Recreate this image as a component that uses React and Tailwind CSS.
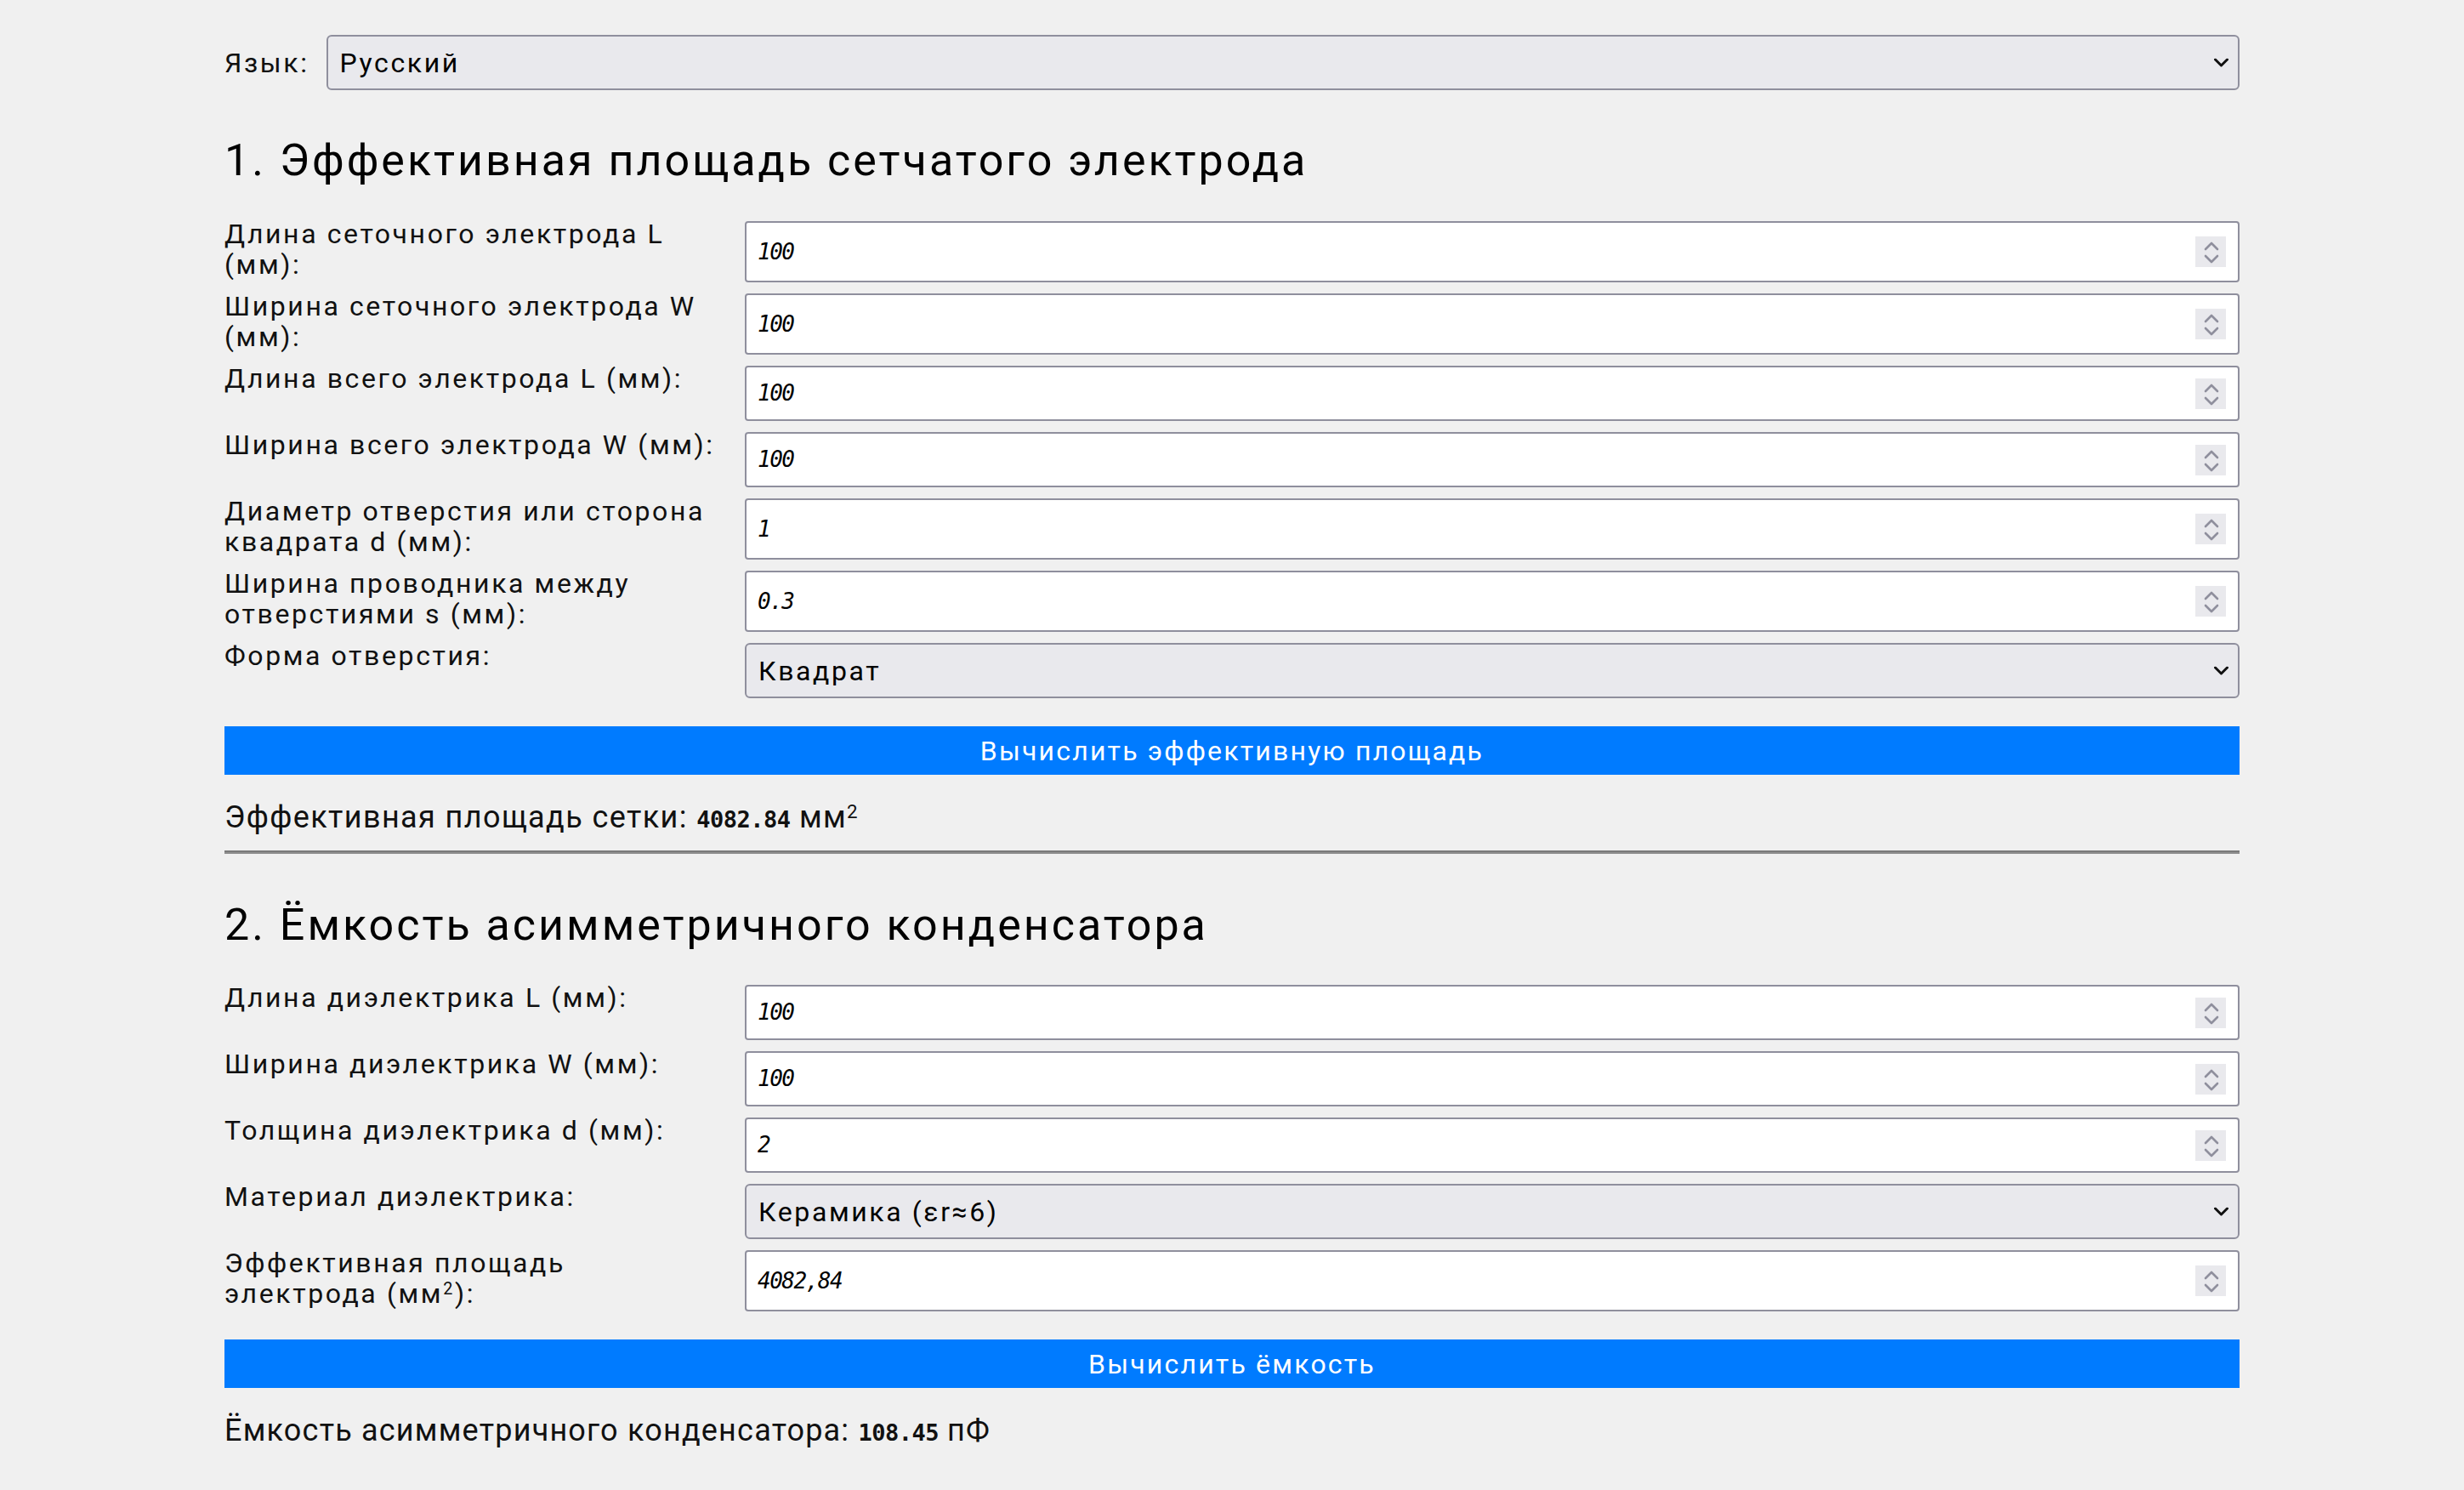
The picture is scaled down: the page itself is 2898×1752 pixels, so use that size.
import React from "react";

const digitFont = "font-['DejaVu_Sans_Mono',monospace] italic";

function Sup() {
  return <sup className="text-[0.62em]">2</sup>;
}

function Spinner() {
  return (
    <div className="pointer-events-none absolute right-[16px] top-1/2 h-[36px] w-[36px] -translate-y-1/2 bg-[#e9e9ed]">
      <svg width="36" height="36" viewBox="0 0 36 36" fill="none">
        <path d="M12 15 L19 8 L26 15" stroke="#8f8f9d" strokeWidth="2.6" strokeLinecap="round" strokeLinejoin="round" />
        <path d="M12 23 L19 30 L26 23" stroke="#8f8f9d" strokeWidth="2.6" strokeLinecap="round" strokeLinejoin="round" />
      </svg>
    </div>
  );
}

function Chevron() {
  return (
    <svg
      className="pointer-events-none absolute right-[13px] top-1/2 -translate-y-1/2"
      width="17"
      height="11"
      viewBox="0 0 17 11"
      fill="none"
    >
      <path d="M1.5 1.5 L8.5 8.5 L15.5 1.5" stroke="#111" strokeWidth="3" strokeLinecap="round" strokeLinejoin="round" />
    </svg>
  );
}

function NumberField({ value }) {
  return (
    <div className="relative flex flex-1">
      <input
        type="text"
        defaultValue={value}
        className={`min-h-[65px] w-full rounded-[4px] border-2 border-[#8f8f9d] bg-white pl-[13px] pr-[60px] text-[26px] tracking-[-1.5px] text-black outline-none ${digitFont}`}
      />
      <Spinner />
    </div>
  );
}

function SelectField({ value, options }) {
  return (
    <div className="relative flex flex-1">
      <select
        defaultValue={value}
        className="min-h-[65px] w-full appearance-none rounded-[6px] border-2 border-[#8f8f9d] bg-[#e9e9ed] pl-[14px] pr-[50px] text-black outline-none"
      >
        {options.map((o) => (
          <option key={o}>{o}</option>
        ))}
      </select>
      <Chevron />
    </div>
  );
}

function Row({ label, children }) {
  return (
    <div className="flex items-stretch gap-[22px]">
      <label className="-mt-[3px] w-[590px] shrink-0 pb-[3px] leading-[36px]">{label}</label>
      {children}
    </div>
  );
}

function Heading({ children }) {
  return (
    <h2 className="text-[52px] leading-[60px] font-normal tracking-[3px] text-black">{children}</h2>
  );
}

function Button({ children }) {
  return (
    <button className="mt-[33px] h-[57px] w-full bg-[#007bff] text-[32px] tracking-[2.2px] text-white">{children}</button>
  );
}

export default function App() {
  return (
    <div className="min-h-screen bg-[#f0f0f0] font-[Roboto,sans-serif] text-[32px] tracking-[2.6px] text-[#111]">
      <div className="mx-auto w-[2370px] pb-[40px] pt-[41px]">
        <div className="flex items-center gap-[20px]">
          <span className="leading-[36px]">Язык:</span>
          <SelectField value="Русский" options={["Русский", "English", "中文"]} />
        </div>

        <div className="mt-[53px]">
          <Heading>1. Эффективная площадь сетчатого электрода</Heading>
        </div>

        <div className="mt-[41px] flex flex-col gap-[13px]">
          <Row label={<>Длина сеточного электрода L<br />(мм):</>}>
            <NumberField value="100" />
          </Row>
          <Row label={<>Ширина сеточного электрода W<br />(мм):</>}>
            <NumberField value="100" />
          </Row>
          <Row label="Длина всего электрода L (мм):">
            <NumberField value="100" />
          </Row>
          <Row label="Ширина всего электрода W (мм):">
            <NumberField value="100" />
          </Row>
          <Row label={<>Диаметр отверстия или сторона<br />квадрата d (мм):</>}>
            <NumberField value="1" />
          </Row>
          <Row label={<>Ширина проводника между<br />отверстиями s (мм):</>}>
            <NumberField value="0.3" />
          </Row>
          <Row label="Форма отверстия:">
            <SelectField value="Квадрат" options={["Квадрат", "Круг"]} />
          </Row>
        </div>

        <Button>Вычислить эффективную площадь</Button>

        <p className="mt-[30px] text-[36px] leading-[40px] tracking-[1.4px]">
          Эффективная площадь сетки:{" "}
          <span className="font-['DejaVu_Sans_Mono',monospace] text-[27px] font-bold tracking-[-0.5px]">
            4082.84
          </span>{" "}
          мм<Sup />
        </p>

        <div className="mt-[16px] h-[4px] border-t-2 border-b-2 border-t-[#7a7a7a] border-b-[#8e8e8e]" />

        <div className="mt-[54px]">
          <Heading>2. Ёмкость асимметричного конденсатора</Heading>
        </div>

        <div className="mt-[40px] flex flex-col gap-[13px]">
          <Row label="Длина диэлектрика L (мм):">
            <NumberField value="100" />
          </Row>
          <Row label="Ширина диэлектрика W (мм):">
            <NumberField value="100" />
          </Row>
          <Row label="Толщина диэлектрика d (мм):">
            <NumberField value="2" />
          </Row>
          <Row label="Материал диэлектрика:">
            <SelectField
              value="Керамика (εr≈6)"
              options={["Керамика (εr≈6)", "Стекло (εr≈5)", "Воздух (εr≈1)"]}
            />
          </Row>
          <Row label={<>Эффективная площадь<br />электрода (мм<Sup />):</>}>
            <NumberField value="4082,84" />
          </Row>
        </div>

        <Button>Вычислить ёмкость</Button>

        <p className="mt-[30px] text-[36px] leading-[40px] tracking-[1.2px]">
          Ёмкость асимметричного конденсатора:{" "}
          <span className="font-['DejaVu_Sans_Mono',monospace] text-[27px] font-bold tracking-[-0.5px]">108.45</span> пФ
        </p>
      </div>
    </div>
  );
}
